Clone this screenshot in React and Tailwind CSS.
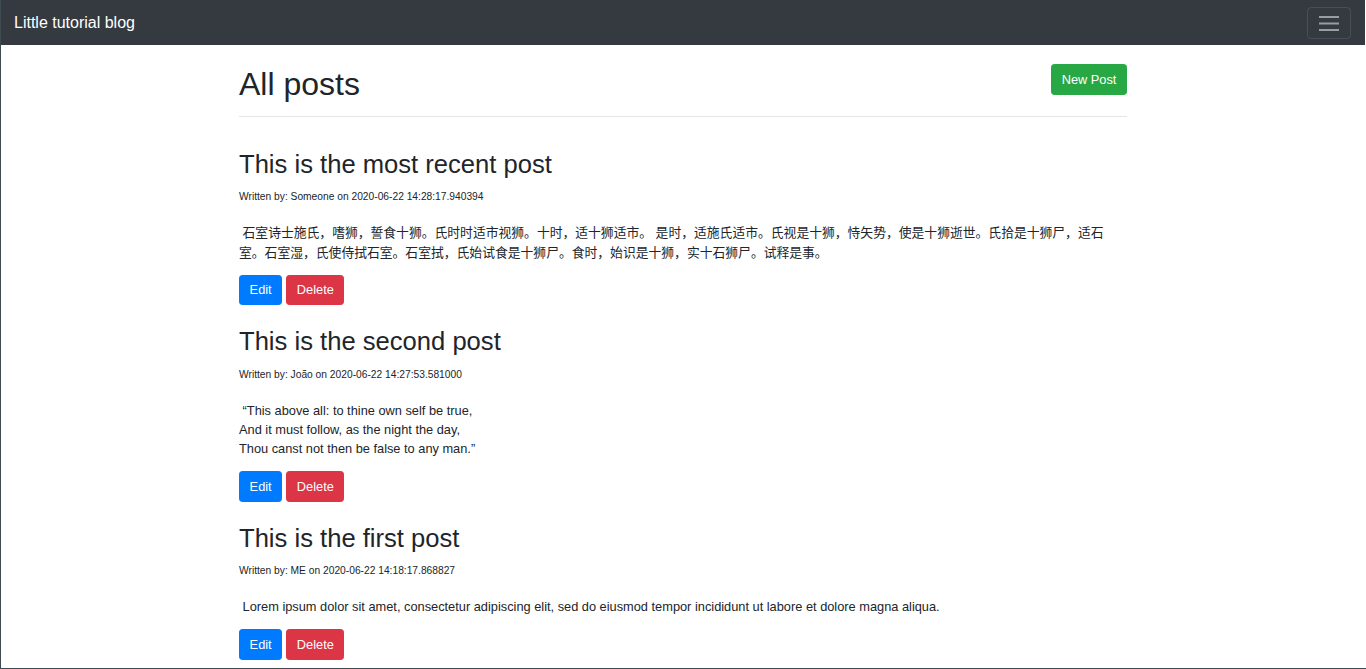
const posts = [
  {
    id: 3,
    title: 'This is the most recent post',
    author: 'Someone',
    date: '2020-06-22 14:28:17.940394',
    body: '\u00a0石室诗士施氏，嗜狮，誓食十狮。氏时时适市视狮。十时，适十狮适市。 是时，适施氏适市。氏视是十狮，恃矢势，使是十狮逝世。氏拾是十狮尸，适石室。石室湿，氏使侍拭石室。石室拭，氏始试食是十狮尸。食时，始识是十狮，实十石狮尸。试释是事。',
  },
  {
    id: 2,
    title: 'This is the second post',
    author: 'João',
    date: '2020-06-22 14:27:53.581000',
    body: '\u00a0“This above all: to thine own self be true,\nAnd it must follow, as the night the day,\nThou canst not then be false to any man.”',
  },
  {
    id: 1,
    title: 'This is the first post',
    author: 'ME',
    date: '2020-06-22 14:18:17.868827',
    body: '\u00a0Lorem ipsum dolor sit amet, consectetur adipiscing elit, sed do eiusmod tempor incididunt ut labore et dolore magna aliqua.',
  },
]

const btn = "text-white text-[12.8px] leading-[19.2px] px-[9.6px] py-[4.8px] border rounded-[3.2px]"

function Post({ post }) {
  return (
    <div className="mb-[21px]">
      <h2 className="text-[25.6px] leading-[1.2] font-normal">{post.title}</h2>
      <p className="mt-[6.4px] leading-[19.2px]">
        <small className="text-[10.24px]">Written by: {post.author} on {post.date}</small>
      </p>
      <p className="mt-[17px] mb-[12.8px] whitespace-pre-wrap">{post.body}</p>
      <div className="flex gap-[4px]">
        <button className={`${btn} bg-[#007bff] border-[#007bff]`}>Edit</button>
        <button className={`${btn} bg-[#dc3545] border-[#dc3545]`}>Delete</button>
      </div>
    </div>
  )
}

export default function App() {
  return (
    <div
      className="h-[669px] overflow-hidden bg-white border-l border-b border-[#3d4a4f] pr-[1px] text-[#212529] text-[12.8px] leading-[19.2px]"
      style={{ fontFamily: '"Liberation Sans", "Noto Sans CJK SC", sans-serif' }}
    >
      <nav className="h-[45px] bg-[#343a40] flex items-center justify-between pl-[13px] pr-[14px]">
        <span className="text-white text-[16px] leading-[24px]">Little tutorial blog</span>
        <button className="w-[44px] h-[32px] border border-white/10 rounded-[4px] flex items-center justify-center">
          <svg width="20" height="16" viewBox="0 0 20 16">
            <path d="M0 2h20M0 8.5h20M0 15h20" stroke="rgba(255,255,255,0.5)" strokeWidth="2" />
          </svg>
        </button>
      </nav>
      <div className="max-w-[888px] mx-auto pt-[20px]">
        <div className="flex items-start justify-between pb-[12.8px] border-b border-black/10">
          <h1 className="text-[32px] leading-[1.2] font-normal">All posts</h1>
          <button className={`${btn} bg-[#28a745] border-[#28a745] -mt-[1px]`}>New Post</button>
        </div>
        <div className="pt-[32px]">
          {posts.map(p => <Post key={p.id} post={p} />)}
        </div>
      </div>
    </div>
  )
}
